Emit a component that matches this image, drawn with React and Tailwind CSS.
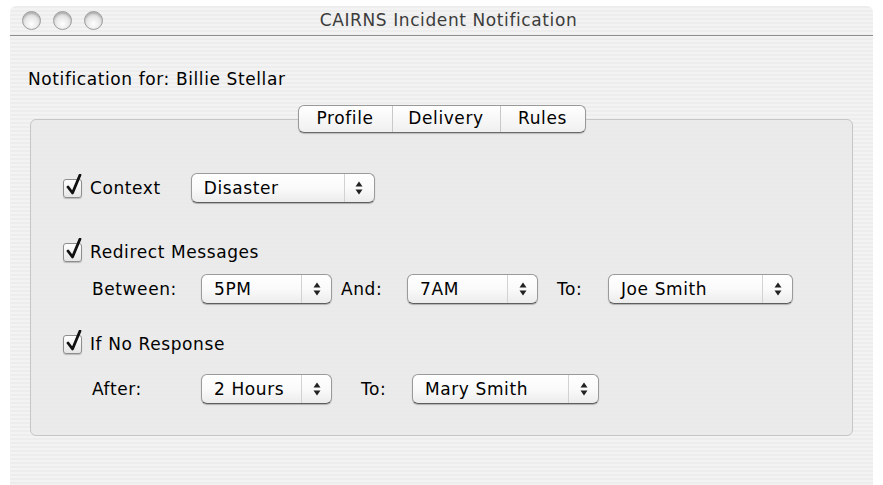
import React from "react";

const stripes =
  "bg-[repeating-linear-gradient(to_bottom,#ededed_0px,#ededed_2px,#f3f3f3_2px,#f3f3f3_4px)]";

function WindowButton() {
  return (
    <div className="w-[19px] h-[19px] rounded-full border border-[#9c9c9c] bg-[radial-gradient(circle_at_50%_70%,#ffffff_0%,#e4e4e4_55%,#c4c4c4_100%)] shadow-[inset_0_2px_2px_rgba(0,0,0,0.18)]" />
  );
}

function Checkbox() {
  return (
    <div className="relative w-[19px] h-[19px] rounded-[3px] border border-[#8e8e8e] bg-gradient-to-b from-white to-[#e6e6e6] shadow-[0_1px_1px_rgba(0,0,0,0.2)]">
      <svg
        className="absolute left-[1px] top-[-6px]"
        width="19"
        height="23"
        viewBox="0 0 19 23"
      >
        <path
          d="M3 13 L7.5 19 L15 1"
          fill="none"
          stroke="#111"
          strokeWidth="2.8"
          strokeLinecap="round"
          strokeLinejoin="round"
        />
      </svg>
    </div>
  );
}

function Arrows() {
  return (
    <svg width="8" height="14" viewBox="0 0 8 14">
      <path d="M4 0.5 L7.5 5.5 L0.5 5.5 Z" fill="#222" />
      <path d="M4 13.5 L7.5 8.5 L0.5 8.5 Z" fill="#222" />
    </svg>
  );
}

function Popup({ value, className }) {
  return (
    <div
      className={`flex h-[30px] items-stretch rounded-[6px] border border-[#9a9a9a] border-b-[#5e5e5e] bg-gradient-to-b from-white via-[#fafafa] to-[#ececec] shadow-[0_1px_1px_rgba(0,0,0,0.25)] ${className}`}
    >
      <div className="flex flex-1 items-center pl-[12px]">{value}</div>
      <div className="flex w-[30px] items-center justify-center border-l border-[#d2d2d2]">
        <Arrows />
      </div>
    </div>
  );
}

function CheckRow({ label, children }) {
  return (
    <div className="flex items-center">
      <Checkbox />
      <span className="ml-[8px]">{label}</span>
      {children}
    </div>
  );
}

export default function App() {
  return (
    <div
      className="w-[883px] h-[485px] overflow-hidden bg-white px-[10px] pt-[6px] text-[17px] tracking-[0.6px] text-black"
      style={{ fontFamily: '"DejaVu Sans", "Liberation Sans", sans-serif' }}
    >
      <div className={`flex h-[490px] flex-col rounded-t-[6px] ${stripes}`}>
        {/* title bar */}
        <div className="relative flex h-[30px] items-center border-b border-[#8f8f8f] px-[12px]">
          <div className="flex gap-[12px]">
            <WindowButton />
            <WindowButton />
            <WindowButton />
          </div>
          <div className="absolute inset-x-0 pl-[14px] text-center text-[#3c3c3c]">
            CAIRNS Incident Notification
          </div>
        </div>

        <div className="px-[18px] pt-[33px] leading-[20px]">
          Notification for: Billie Stellar
        </div>

        <div className="mt-[16px] px-[20px]">
          <div className="relative z-10 flex justify-center">
            <div className="flex h-[28px] items-stretch rounded-[6px] border border-[#999] border-b-[#6a6a6a] bg-gradient-to-b from-white to-[#f0f0f0] shadow-[0_1px_1px_rgba(0,0,0,0.2)]">
              <div className="flex w-[93px] items-center justify-center">Profile</div>
              <div className="flex w-[108px] items-center justify-center border-l border-[#c9c9c9]">
                Delivery
              </div>
              <div className="flex w-[85px] items-center justify-center border-l border-[#c9c9c9]">
                Rules
              </div>
            </div>
          </div>

          {/* tab box */}
          <div className="-mt-[14px] rounded-[6px] border border-[#c6c6c6] bg-[#e8e8e8]/80 pl-[32px] pt-[53px] pb-[31px] leading-[20px]">
            <CheckRow label="Context">
              <Popup value="Disaster" className="ml-[30px] w-[184px]" />
            </CheckRow>

            <div className="mt-[39px]">
              <CheckRow label="Redirect Messages" />
            </div>
            <div className="mt-[12px] flex items-center pl-[29px]">
              <span className="w-[109px]">Between:</span>
              <Popup value="5PM" className="w-[131px]" />
              <span className="ml-[9px] w-[66px]">And:</span>
              <Popup value="7AM" className="w-[131px]" />
              <span className="ml-[19px] w-[51px]">To:</span>
              <Popup value="Joe Smith" className="w-[185px]" />
            </div>

            <div className="mt-[30px]">
              <CheckRow label="If No Response" />
            </div>
            <div className="mt-[20px] flex items-center pl-[29px]">
              <span className="w-[109px]">After:</span>
              <Popup value="2 Hours" className="w-[131px]" />
              <span className="ml-[29px] w-[51px]">To:</span>
              <Popup value="Mary Smith" className="w-[187px]" />
            </div>
          </div>
        </div>
      </div>
    </div>
  );
}
